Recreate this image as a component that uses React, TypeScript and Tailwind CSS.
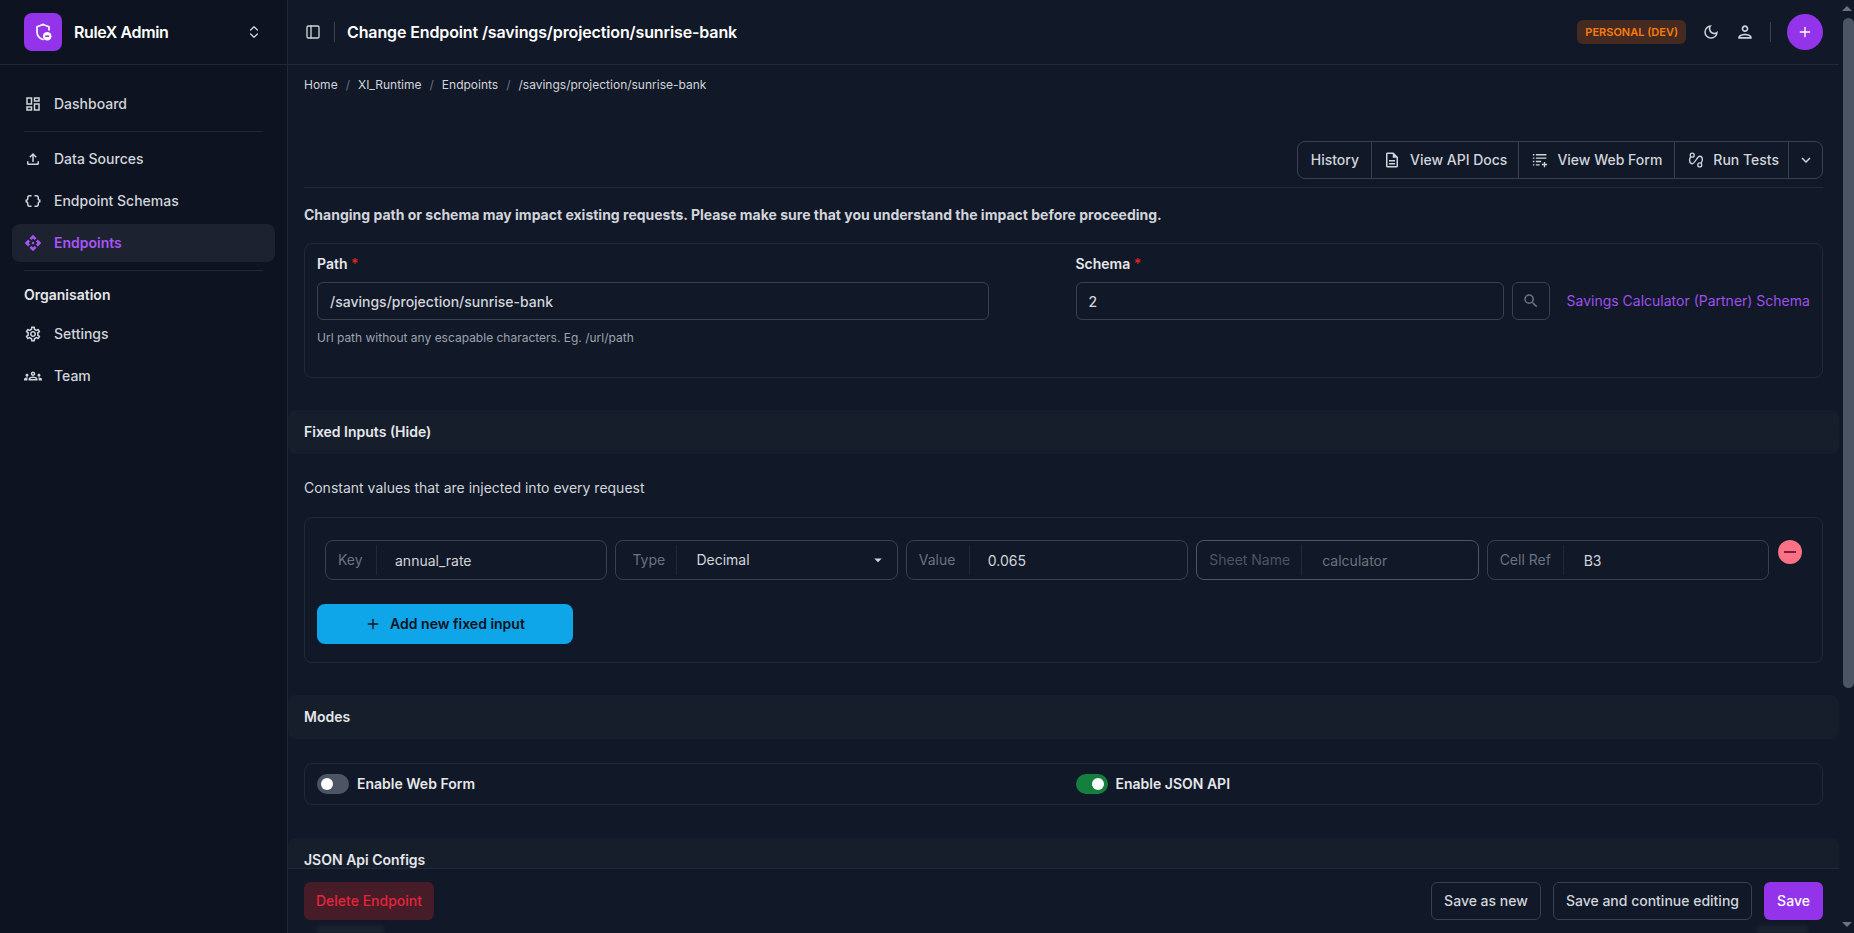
import { ChevronsUpDown, PanelLeft, Plus } from "lucide-react";
import {
  MdApi,
  MdArrowDropDown,
  MdDataObject,
  MdExpandMore,
  MdOutlineDarkMode,
  MdOutlineDashboard,
  MdOutlineDescription,
  MdOutlineFileUpload,
  MdOutlineGroups,
  MdOutlinePerson,
  MdOutlineSettings,
  MdSearch,
} from "react-icons/md";

function ShieldLogo() {
  return (
    <svg viewBox="0 0 24 24" className="w-[24px] h-[24px]" fill="none">
      <path
        d="M12 4.5 6 6.8v4.6c0 3.8 2.5 7 6 8.1"
        stroke="white"
        strokeWidth="1.7"
        strokeLinecap="round"
        strokeLinejoin="round"
      />
      <path d="M12 4.5l6 2.3v3" stroke="white" strokeWidth="1.7" strokeLinecap="round" strokeLinejoin="round" />
      <circle cx="16.2" cy="16.2" r="4.3" fill="white" />
      <rect x="14.2" y="15.4" width="4" height="1.6" fill="#9333ea" />
    </svg>
  );
}

function ListAddIcon() {
  return (
    <svg viewBox="0 0 24 24" className="w-[18px] h-[18px]" fill="none" stroke="currentColor" strokeWidth="1.8">
      <path d="M2.5 5h2M6.5 5h14M2.5 9.5h2M6.5 9.5h14M2.5 14h2M6.5 14h7M2.5 18.5h2M6.5 18.5h5" />
      <path d="M18 14.5v7M14.5 18h7" />
    </svg>
  );
}

function RouteIcon() {
  return (
    <svg viewBox="0 0 24 24" className="w-[18px] h-[18px]" fill="none" stroke="currentColor" strokeWidth="1.8">
      <circle cx="7" cy="5.5" r="2.6" />
      <circle cx="17" cy="18.5" r="2.6" />
      <path d="M5 7.5C2.5 11 3 17 7 17 10.5 17 13.5 7 17 7 21 7 21.5 12.5 18.8 16.3" />
    </svg>
  );
}

function NavItem({ icon, label, active }: { icon: React.ReactNode; label: string; active?: boolean }) {
  return (
    <div
      className={
        active
          ? "h-[38px] mx-3 px-[12px] rounded-lg bg-[#1c2230] flex items-center gap-[12px] text-[#a855f7] text-sm font-semibold"
          : "h-[38px] mx-3 px-[12px] rounded-lg flex items-center gap-[12px] text-[#d1d5db] text-sm font-medium"
      }
    >
      <span className="w-[18px] flex justify-center text-[18px]">{icon}</span>
      {label}
    </div>
  );
}

function FieldGroup({
  label,
  value,
  labelClass,
  valueClass,
  select,
  muted,
}: {
  label: string;
  value: string;
  labelClass: string;
  valueClass: string;
  select?: boolean;
  muted?: boolean;
}) {
  return (
    <div
      className={
        muted
          ? "flex-1 h-10 flex items-center rounded-lg border border-[#4b5563] text-sm"
          : "flex-1 h-10 flex items-center rounded-lg border border-[#374151] text-sm"
      }
    >
      <span className={`${labelClass} ${muted ? "text-[#4b5563]" : "text-[#6b7280]"}`}>{label}</span>
      <span className="w-px h-[30px] bg-[#1f2937]" />
      <span className={`${valueClass} flex-1 ${select ? "" : "pt-[2px]"} ${muted ? "text-[#6b7280]" : "text-[#d1d5db]"}`}>{value}</span>
      {select && <MdArrowDropDown className="text-[18px] text-[#d1d5db] mr-[10px]" />}
    </div>
  );
}

function Toggle({ on }: { on?: boolean }) {
  return (
    <span
      className={
        on
          ? "w-8 h-5 rounded-full bg-[#15803d] flex items-center justify-end pr-1"
          : "w-8 h-5 rounded-full bg-[#4b5563] flex items-center pl-1"
      }
    >
      <span className="w-3 h-3 rounded-full bg-white" />
    </span>
  );
}

function Band({ title, className }: { title: string; className: string }) {
  return (
    <div className={`h-[44px] px-4 flex items-center bg-[#171e2b] rounded-lg text-[#e5e7eb] text-sm font-semibold ${className}`}>
      {title}
    </div>
  );
}

export default function App() {
  return (
    <div className="flex h-screen overflow-hidden bg-[#111827] font-['Inter',sans-serif]">
      {/* Sidebar */}
      <aside className="w-[288px] shrink-0 bg-[#0d1320] border-r border-[#1f2937]">
        <div className="h-[65px] border-b border-[#1f2937] pl-6 pr-6 flex items-center">
          <div className="w-[38px] h-[38px] rounded-lg bg-[#9333ea] flex items-center justify-center">
            <ShieldLogo />
          </div>
          <span className="ml-3 text-white font-semibold text-base tracking-tight flex-1">RuleX Admin</span>
          <ChevronsUpDown size={16} className="text-[#d1d5db] mr-[1px]" />
        </div>
        <nav className="pt-5 flex flex-col">
          <NavItem icon={<MdOutlineDashboard />} label="Dashboard" />
          <div className="mx-6 my-2 h-px bg-[#1f2937]" />
          <div className="flex flex-col gap-1">
            <NavItem icon={<MdOutlineFileUpload />} label="Data Sources" />
            <NavItem icon={<MdDataObject />} label="Endpoint Schemas" />
            <NavItem icon={<MdApi />} label="Endpoints" active />
          </div>
          <div className="mx-6 mt-2 h-px bg-[#1f2937]" />
          <div className="mx-6 mt-[14px] mb-[10px] text-[#e5e7eb] text-sm font-semibold leading-5">Organisation</div>
          <div className="flex flex-col gap-1">
            <NavItem icon={<MdOutlineSettings />} label="Settings" />
            <NavItem icon={<MdOutlineGroups />} label="Team" />
          </div>
        </nav>
      </aside>

      {/* Main column */}
      <div className="relative flex-1 min-w-0 pr-[15px] flex flex-col overflow-hidden">
        <header className="h-[65px] shrink-0 border-b border-[#1f2937] pl-4 pr-4 flex items-center">
          <PanelLeft size={16} className="text-[#d1d5db] ml-[1px]" />
          <span className="w-px h-5 bg-[#374151] ml-[13px] mr-3" />
          <span className="text-white text-base font-semibold tracking-[-0.125px]">Change Endpoint /savings/projection/sunrise-bank</span>
          <div className="ml-auto flex items-center">
            <span className="h-6 px-2 rounded-md bg-[#452a22] text-[#f97c0a] text-[11px] font-semibold flex items-center leading-none">
              PERSONAL (DEV)
            </span>
            <MdOutlineDarkMode className="ml-4 text-[18px] text-[#d1d5db]" />
            <MdOutlinePerson className="ml-[15px] text-[20px] text-[#d1d5db]" />
            <span className="w-px h-5 bg-[#374151] ml-[15px] mr-4" />
            <span className="w-9 h-9 rounded-full bg-[#9333ea] flex items-center justify-center text-white">
              <Plus size={16} />
            </span>
          </div>
        </header>

        <main className="flex-1 min-h-0 overflow-hidden">
          <div className="px-4">
            <div className="h-[40px] flex items-center gap-2 text-xs text-[#d1d5db]">
              <span>Home</span>
              <span className="text-[#6b7280]">/</span>
              <span>XI_Runtime</span>
              <span className="text-[#6b7280]">/</span>
              <span>Endpoints</span>
              <span className="text-[#6b7280]">/</span>
              <span>/savings/projection/sunrise-bank</span>
            </div>

            <div className="mt-[36px] flex justify-end">
              <div className="h-[38px] flex items-center rounded-lg border border-[#374151] text-[#d1d5db] text-sm font-medium">
                <div className="h-full flex items-center pl-[13px] pr-3">History</div>
                <div className="h-full flex items-center gap-[9px] pl-[11px] pr-[11px] border-l border-[#374151]">
                  <MdOutlineDescription className="text-[18px]" />
                  View API Docs
                </div>
                <div className="h-full flex items-center gap-2 pl-3 pr-3 border-l border-[#374151]">
                  <ListAddIcon />
                  View Web Form
                </div>
                <div className="h-full flex items-center gap-2 pl-3 pr-[9px] border-l border-[#374151]">
                  <RouteIcon />
                  Run Tests
                </div>
                <div className="h-full w-[34px] flex items-center justify-center border-l border-[#374151]">
                  <MdExpandMore className="text-[18px]" />
                </div>
              </div>
            </div>
            <div className="mt-2 h-px bg-[#1f2937]" />

            <p className="h-[54px] mb-px flex items-center text-sm font-bold text-[#d1d5db]">
              Changing path or schema may impact existing requests. Please make sure that you understand the impact before
              proceeding.
            </p>

            <section className="h-[135px] rounded-lg border border-[#1f2937] px-3 grid grid-cols-2 gap-6">
              <div className="pt-[10px]">
                <div className="text-sm font-semibold text-[#e5e7eb] leading-5">
                  Path <span className="text-[#dc2626]">*</span>
                </div>
                <input
                  readOnly
                  value="/savings/projection/sunrise-bank"
                  className="mt-[8px] w-[672px] h-[38px] rounded-md border border-[#374151] bg-transparent px-3 text-sm font-medium text-[#d1d5db] outline-none"
                />
                <div className="mt-[10px] text-xs text-[#9ca3af]">Url path without any escapable characters. Eg. /url/path</div>
              </div>
              <div className="pt-[10px]">
                <div className="text-sm font-semibold text-[#e5e7eb] leading-5">
                  Schema <span className="text-[#dc2626]">*</span>
                </div>
                <div className="mt-[8px] flex items-center">
                  <input
                    readOnly
                    value="2"
                    className="w-[428px] h-[38px] rounded-md border border-[#374151] bg-transparent px-3 text-sm font-medium text-[#d1d5db] outline-none"
                  />
                  <span className="ml-2 w-[38px] h-[38px] rounded-md border border-[#374151] flex items-center justify-center text-[#6b7280]">
                    <MdSearch className="text-[18px]" />
                  </span>
                  <span className="ml-[17px] text-sm text-[#9f50ec] whitespace-nowrap">Savings Calculator (Partner) Schema</span>
                </div>
              </div>
            </section>
          </div>

          <Band title="Fixed Inputs (Hide)" className="mt-[32px]" />

          <div className="px-4">
            <p className="h-[63px] pt-1 flex items-center text-sm text-[#d1d5db]">Constant values that are injected into every request</p>

            <section className="h-[146px] rounded-lg border border-[#1f2937] px-3">
              <div className="pt-[22px] pl-[8px] pr-[8px] flex items-start gap-2">
                <FieldGroup label="Key" value="annual_rate" labelClass="w-[50px] pl-3" valueClass="pl-[18px]" />
                <FieldGroup label="Type" value="Decimal" labelClass="w-[60px] pl-4" valueClass="pl-[19px]" select />
                <FieldGroup label="Value" value="0.065" labelClass="w-[62px] pl-3" valueClass="pl-[18px]" />
                <FieldGroup label="Sheet Name" value="calculator" labelClass="w-[104px] pl-3" valueClass="pl-5" muted />
                <FieldGroup label="Cell Ref" value="B3" labelClass="w-[75px] pl-3" valueClass="pl-5" />
                <span className="w-6 h-6 ml-px shrink-0 rounded-full bg-[#fb7185] flex items-center justify-center">
                  <span className="w-[12px] h-[2px] bg-[#7f1d3d]" />
                </span>
              </div>
              <button className="mt-[24px] w-[256px] h-10 rounded-lg bg-[#0ea5e9] text-[#0b1220] text-sm font-semibold flex items-center justify-center gap-[9px]">
                <Plus size={16} />
                Add new fixed input
              </button>
            </section>
          </div>

          <Band title="Modes" className="mt-[32px]" />

          <div className="px-4">
            <section className="mt-[24px] h-[42px] rounded-lg border border-[#1f2937] px-3 grid grid-cols-2 gap-6 items-center">
              <div className="flex items-center gap-2 text-sm font-semibold text-[#e5e7eb]">
                <Toggle />
                Enable Web Form
              </div>
              <div className="flex items-center gap-2 text-sm font-semibold text-[#e5e7eb]">
                <Toggle on />
                Enable JSON API
              </div>
            </section>
          </div>

          <Band title="JSON Api Configs" className="mt-[33px]" />
        </main>

        {/* Sticky action bar */}
        <footer className="absolute left-0 right-[15px] bottom-0 h-[65px] border-t border-[#1f2937] bg-[#111827] px-4 flex items-center">
          <button className="h-[38px] px-3 rounded-md bg-[#451c28] text-[#e5243b] text-sm font-medium">Delete Endpoint</button>
          <div className="ml-auto flex items-center gap-3">
            <button className="h-[38px] px-3 rounded-md border border-[#374151] text-[#d1d5db] text-sm font-medium">Save as new</button>
            <button className="h-[38px] px-3 rounded-md border border-[#374151] text-[#d1d5db] text-sm font-medium">
              Save and continue editing
            </button>
            <button className="h-[38px] w-[59px] rounded-md bg-[#9333ea] text-white text-sm font-medium">Save</button>
          </div>
          <span className="absolute left-[29px] bottom-0 w-[67px] h-[7px] bg-white/5 blur-[2px]" />
          <span className="absolute right-[31px] bottom-0 w-[51px] h-[7px] bg-white/5 blur-[2px]" />
        </footer>

        {/* Scrollbar */}
        <div className="absolute right-0 top-0 bottom-0 w-[15px] bg-[#111827] flex flex-col items-center">
          <span className="mt-[6px] w-0 h-0 border-x-[5px] border-x-transparent border-b-[5px] border-b-[#6b7280]" />
          <span className="mt-[7px] w-[11px] h-[670px] rounded-full bg-[#4b5563] ml-[3px]" />
          <span className="mt-auto mb-[6px] w-0 h-0 border-x-[5px] border-x-transparent border-t-[5px] border-t-[#6b7280]" />
        </div>
      </div>
    </div>
  );
}
